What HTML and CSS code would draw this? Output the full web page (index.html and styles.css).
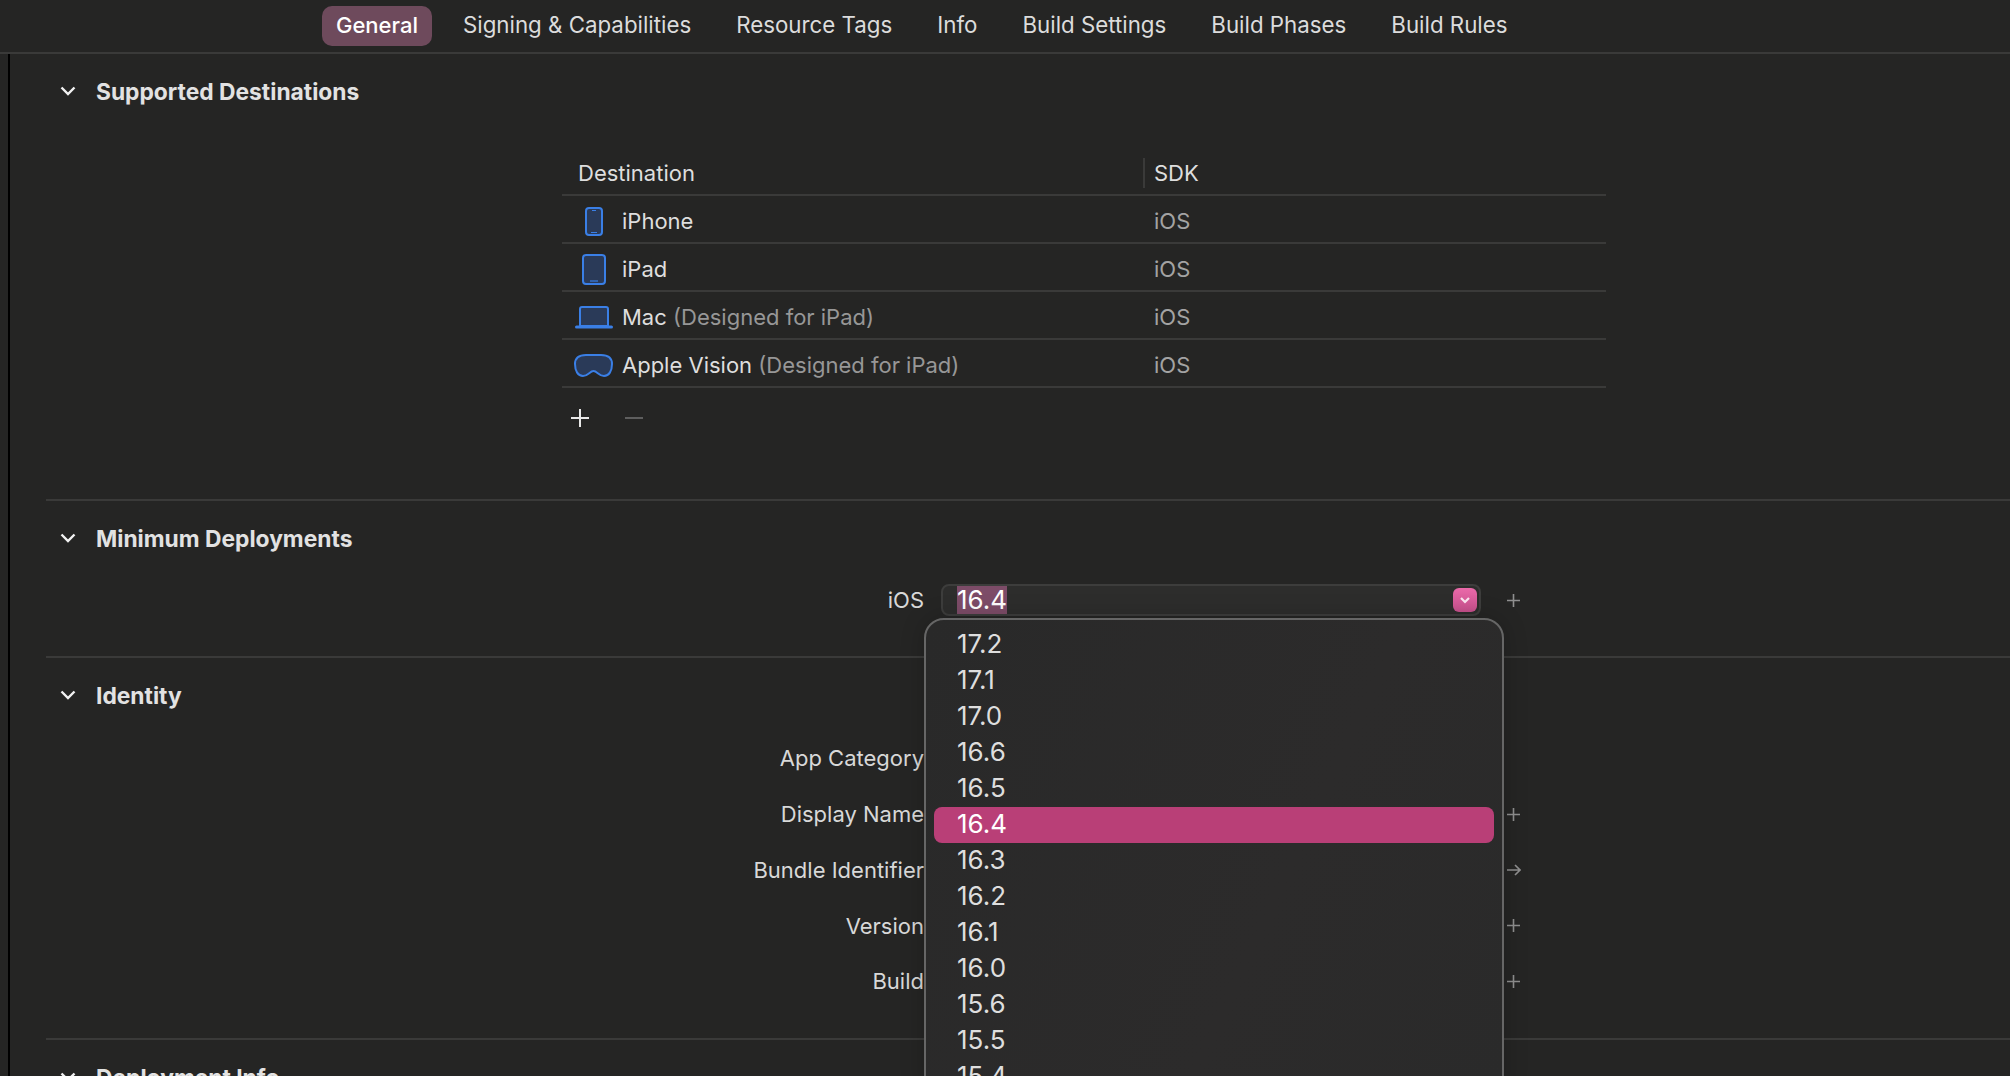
FILE: index.html
```html
<!DOCTYPE html>
<html lang="en">
<head>
<meta charset="utf-8">
<title>General</title>
<link rel="stylesheet" href="styles.css">
</head>
<body>
<nav class="tabs">
  <a class="tab active">General</a>
  <a class="tab">Signing &amp; Capabilities</a>
  <a class="tab">Resource Tags</a>
  <a class="tab">Info</a>
  <a class="tab">Build Settings</a>
  <a class="tab">Build Phases</a>
  <a class="tab">Build Rules</a>
</nav>
<main class="content">
  <section class="section s-dest">
    <header class="head">
      <svg class="chev" viewBox="0 0 16 10"><path d="M1.500 1.500 8 8l6.500-6.500"/></svg>
      <h2>Supported Destinations</h2>
    </header>
    <div class="table">
      <div class="tr th">
        <div class="c1 thname">Destination</div>
        <div class="c2 thsdk">SDK</div>
      </div>
      <div class="tr">
        <div class="c1">
          <span class="ico"><svg width="18" height="29" viewBox="0 0 18 29"><rect class="dev" x="1" y="1" width="16" height="27" rx="3"/><path class="det" d="M7 3.500h4M6 25.500h6"/></svg></span>
          <span>iPhone</span>
        </div>
        <div class="c2 sdk">iOS</div>
      </div>
      <div class="tr">
        <div class="c1">
          <span class="ico"><svg width="24" height="31" viewBox="0 0 24 31"><rect class="dev" x="1" y="1" width="22" height="29" rx="3"/><path class="det" d="M8 27h8"/></svg></span>
          <span>iPad</span>
        </div>
        <div class="c2 sdk">iOS</div>
      </div>
      <div class="tr">
        <div class="c1">
          <span class="ico"><svg width="40" height="23" viewBox="0 0 40 23"><path class="dev" d="M6 20V3a2 2 0 0 1 2-2h24a2 2 0 0 1 2 2v17z"/><path class="bar" d="M2.500 21h35"/></svg></span>
          <span>Mac <span class="muted">(Designed for iPad)</span></span>
        </div>
        <div class="c2 sdk">iOS</div>
      </div>
      <div class="tr">
        <div class="c1">
          <span class="ico"><svg width="39" height="23" viewBox="0 0 39 23"><path class="dev" d="M12 1h15c7 0 11 3 11 9 0 7-3 12-8 12-5 0-7-5-10.500-5S14 22 9 22c-5 0-8-5-8-12C1 4 5 1 12 1z"/></svg></span>
          <span>Apple Vision <span class="muted">(Designed for iPad)</span></span>
        </div>
        <div class="c2 sdk">iOS</div>
      </div>
      <div class="tools">
        <svg class="tool-add" width="18" height="18" viewBox="0 0 18 18"><path d="M9 0v18M0 9h18"/></svg>
        <svg class="tool-rem" width="18" height="18" viewBox="0 0 18 18"><path d="M0 9h18"/></svg>
      </div>
    </div>
  </section>

  <section class="section s-min">
    <header class="head">
      <svg class="chev" viewBox="0 0 16 10"><path d="M1.500 1.500 8 8l6.500-6.500"/></svg>
      <h2>Minimum Deployments</h2>
    </header>
    <div class="row row-field">
      <label class="lab">iOS</label>
      <div class="field">
        <span class="sel">16.4</span>
        <span class="stepper"><svg width="10" height="7" viewBox="0 0 10 7"><path d="M1 1l4 4 4-4"/></svg></span>
      </div>
      <svg class="plus" width="13" height="13" viewBox="0 0 13 13"><path d="M6.500 0v13M0 6.500h13"/></svg>
    </div>
  </section>

  <section class="section s-id">
    <header class="head">
      <svg class="chev" viewBox="0 0 16 10"><path d="M1.500 1.500 8 8l6.500-6.500"/></svg>
      <h2>Identity</h2>
    </header>
    <div class="rows">
      <div class="row"><label class="lab">App Category</label><div class="blank"></div></div>
      <div class="row"><label class="lab">Display Name</label><div class="blank"></div><svg class="plus" width="13" height="13" viewBox="0 0 13 13"><path d="M6.500 0v13M0 6.500h13"/></svg></div>
      <div class="row"><label class="lab">Bundle Identifier</label><div class="blank"></div><svg class="plus" width="14" height="12" viewBox="0 0 14 12"><path d="M0 6h13M8 1l5 5-5 5"/></svg></div>
      <div class="row"><label class="lab">Version</label><div class="blank"></div><svg class="plus" width="13" height="13" viewBox="0 0 13 13"><path d="M6.500 0v13M0 6.500h13"/></svg></div>
      <div class="row"><label class="lab">Build</label><div class="blank"></div><svg class="plus" width="13" height="13" viewBox="0 0 13 13"><path d="M6.500 0v13M0 6.500h13"/></svg></div>
    </div>
  </section>

  <section class="section s-dep">
    <header class="head">
      <svg class="chev" viewBox="0 0 16 10"><path d="M1.500 1.500 8 8l6.500-6.500"/></svg>
      <h2>Deployment Info</h2>
    </header>
  </section>
</main>

<ul class="popup">
  <li>17.2</li>
  <li>17.1</li>
  <li>17.0</li>
  <li>16.6</li>
  <li>16.5</li>
  <li class="current">16.4</li>
  <li>16.3</li>
  <li>16.2</li>
  <li>16.1</li>
  <li>16.0</li>
  <li>15.6</li>
  <li>15.5</li>
  <li>15.4</li>
</ul>
</body>
</html>
```

FILE: styles.css
```css
* { box-sizing: border-box; }
html, body { height: 100%; }
body {
  margin: 0;
  height: 1076px;
  overflow: hidden;
  background: #252524;
  color: #dedede;
  font-family: Inter, "Liberation Sans", sans-serif;
  font-size: 22px;
  display: flex;
  flex-direction: column;
  position: relative;
}
.tabs {
  height: 54px;
  flex: none;
  border-bottom: 2px solid #3a3a39;
  display: flex;
  align-items: flex-start;
  gap: 17px;
  padding: 6px 0 0 322px;
}
.tab {
  height: 40px;
  line-height: 38px;
  padding: 0 14px;
  border-radius: 10px;
  font-size: 22.300px;
  color: #dcdcdc;
  white-space: nowrap;
}
.tab.active { background: #6e4a5c; color: #fff; font-weight: 500; font-size: 22px; }
.content {
  flex: 1;
  margin-left: 8px;
  border-left: 2px solid #000;
  padding-left: 36px;
  min-height: 0;
}
.section { border-bottom: 2px solid #3a3a39; }
.s-dest { height: 447px; }
.s-min { height: 157px; }
.s-id { height: 382px; }
.s-dep { border-bottom: 0; }
.head {
  height: 76px;
  display: flex;
  align-items: center;
  gap: 20px;
  padding: 0 0 2px 14px;
}
.chev { width: 16px; height: 10px; flex: none; fill: none; stroke: #f2f2f2; stroke-width: 2.400; }
h2 { margin: 0; font-size: 22.800px; font-weight: 700; color: #e2e2e2; }
.table { margin: 18px 0 0 516px; width: 1044px; }
.tr {
  height: 48px;
  padding-top: 3px;
  display: flex;
  align-items: center;
  border-bottom: 2px solid #3a3a39;
}
.c1 { width: 592px; display: flex; align-items: center; flex: none; }
.ico { width: 60px; display: flex; justify-content: center; padding: 2px 0 0 3px; flex: none; }
.thname { padding-left: 16px; }
.thsdk { height: 30px; line-height: 30px; border-left: 2px solid #3a3a39; padding-left: 9px; margin-left: -11px; }
.sdk { color: #a3a3a3; }
.muted { color: #979797; }
.dev { fill: #2a3a58; stroke: #3a7fe6; stroke-width: 2; }
.det { fill: none; stroke: #3a7fe6; stroke-width: 1.200; }
.bar { fill: none; stroke: #3a7fe6; stroke-width: 3; stroke-linecap: round; }
.tools { height: 60px; display: flex; align-items: center; gap: 36px; padding-left: 9px; }
.tool-add path { fill: none; stroke: #e8e8e8; stroke-width: 2; }
.tool-rem path { fill: none; stroke: #5e5e5e; stroke-width: 2; }
.row { height: 55.750px; display: flex; align-items: center; }
.row-field { height: 46px; }
.rows { margin-top: -3.500px; }
.lab { width: 878px; text-align: right; flex: none; color: #d8d8d8; }
.field {
  margin-left: 17px;
  width: 540px;
  height: 32px;
  flex: none;
  border: 2px solid #3d3d3c;
  border-radius: 8px;
  background: #2d2d2c;
  display: flex;
  align-items: center;
  justify-content: space-between;
  padding: 0 2px 0 14px;
  font-size: 26px;
  color: #fff;
}
.sel { background: #7d4c68; line-height: 28px; }
.stepper {
  width: 24px;
  height: 24px;
  border-radius: 6px;
  background: linear-gradient(#ea69a9, #c6508c);
  display: flex;
  align-items: center;
  justify-content: center;
}
.stepper path { fill: none; stroke: #fbe6f0; stroke-width: 2.200; }
.blank { margin-left: 17px; width: 540px; flex: none; }
.plus { margin-left: 26px; flex: none; }
.plus path { fill: none; stroke: #8f8f8f; stroke-width: 1.600; }
.popup {
  position: absolute;
  left: 924px;
  top: 618px;
  width: 580px;
  height: 480px;
  margin: 0;
  padding: 7px 8px;
  list-style: none;
  overflow: hidden;
  background: linear-gradient(115deg, #292929, #2c2b2b 60%, #2a2a2a);
  border: 2px solid #666;
  border-radius: 20px;
  box-shadow: 0 0 24px rgba(0, 0, 0, .2);
  font-size: 26px;
  color: #dedede;
}
.popup li { height: 36px; line-height: 34px; padding-left: 23px; border-radius: 8px; }
.popup .current { background: #b93f77; color: #fff; }
```
